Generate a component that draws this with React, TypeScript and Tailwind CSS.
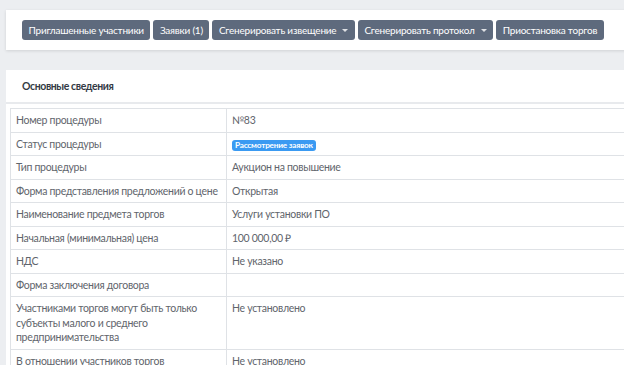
import React from "react";

const actions: { label: string; caret?: boolean }[] = [
  { label: "Приглашенные участники" },
  { label: "Заявки (1)" },
  { label: "Сгенерировать извещение", caret: true },
  { label: "Сгенерировать протокол", caret: true },
  { label: "Приостановка торгов" },
];

const rows: { name: string; value?: string; badge?: string }[] = [
  { name: "Номер процедуры", value: "№83" },
  { name: "Статус процедуры", badge: "Рассмотрение заявок" },
  { name: "Тип процедуры", value: "Аукцион на повышение" },
  { name: "Форма представления предложений о цене", value: "Открытая" },
  { name: "Наименование предмета торгов", value: "Услуги установки ПО" },
  { name: "Начальная (минимальная) цена", value: "100 000,00 ₽" },
  { name: "НДС", value: "Не указано" },
  { name: "Форма заключения договора", value: "" },
  {
    name: "Участниками торгов могут быть только субъекты малого и среднего предпринимательства",
    value: "Не установлено",
  },
  {
    name: "В отношении участников торгов установлено требование об отсутствии сведений в реестре",
    value: "Не установлено",
  },
];

const App = () => {
  return (
    <div className="h-screen overflow-hidden bg-[#eceef1] font-['Lato',sans-serif]">
      <div className="w-[700px] pl-[6px] pt-[10px]">
        <div className="flex gap-[3px] bg-white py-[10px] pl-[16px] shadow-[0_1px_3px_rgba(0,0,0,0.12)]">
          {actions.map((a) => (
            <button
              key={a.label}
              type="button"
              className="flex h-[20px] items-center gap-[6px] rounded-[3px] bg-[#5e6a7d] px-[6.5px] text-[10px] leading-none tracking-[-0.22px] text-white"
            >
              {a.label}
              {a.caret && (
                <span className="h-0 w-0 border-x-[3px] border-t-[3px] border-x-transparent border-t-white/80" />
              )}
            </button>
          ))}
        </div>

        <div className="mt-[20px] bg-white">
          <div className="flex h-[34px] items-center border-b-2 border-[#e8eaed] pl-[16px] pt-[1px] text-[10.5px] font-bold tracking-[-0.4px] text-[#333a44]">
            Основные сведения
          </div>
          <div className="pl-[4px] pt-[4px]">
            <table className="w-full border-collapse text-[10.5px] tracking-[-0.3px] text-[#5f656c]">
              <tbody>
                {rows.map((r) => (
                  <tr key={r.name}>
                    <td className="w-[216px] border border-[#dfe2e6] px-[5px] py-[4px] align-top leading-[14.5px]">
                      {r.name}
                    </td>
                    <td className="border border-[#dfe2e6] px-[5px] py-[4px] align-top leading-[14.5px]">
                      {r.badge ? (
                        <span className="inline-block rounded-[3px] bg-[#3a9af2] px-[3px] text-[8.2px] font-bold leading-[11px] tracking-[-0.2px] text-white">
                          {r.badge}
                        </span>
                      ) : (
                        r.value
                      )}
                    </td>
                  </tr>
                ))}
              </tbody>
            </table>
          </div>
        </div>
      </div>
    </div>
  );
};

export default App;
